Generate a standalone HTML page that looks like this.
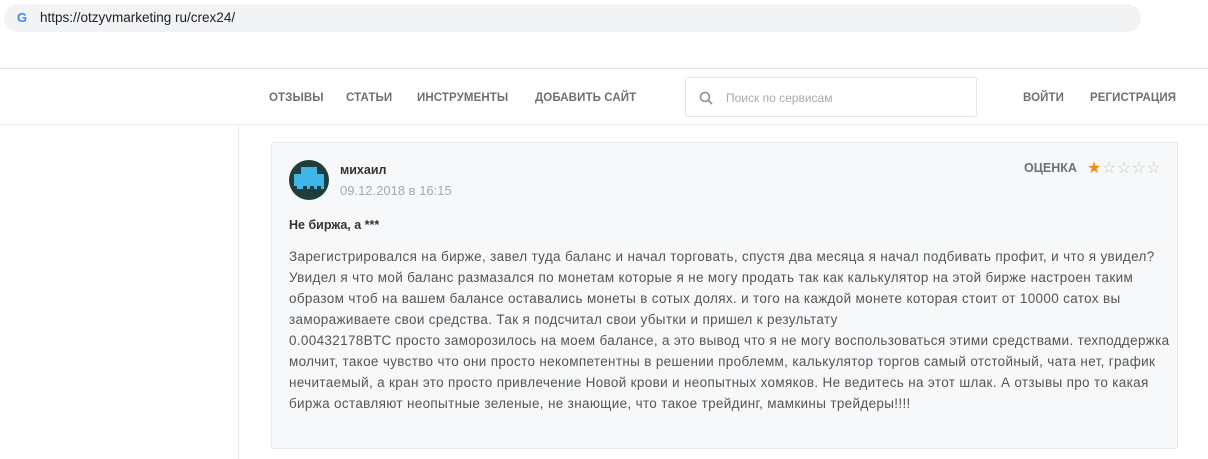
<!DOCTYPE html>
<html><head><meta charset="utf-8"><style>
*{margin:0;padding:0;box-sizing:border-box}
body{width:1208px;height:459px;background:#fff;font-family:"Liberation Sans",sans-serif;position:relative;overflow:hidden}
.url{position:absolute;left:4px;top:4px;width:1137px;height:28px;background:#f1f3f4;border-radius:14px}
.url .t{position:absolute;left:36px;top:6px;font-size:13.5px;color:#202124}
.url .g{position:absolute;left:13px;top:6px;font-size:13px;font-weight:bold;color:#4285f4}
.l1{position:absolute;left:0;top:68px;width:1208px;height:1px;background:#e3e3e3}
.l2{position:absolute;left:0;top:124px;width:1208px;height:1px;background:#ececec}
.nav{position:absolute;top:92px;font-size:11.5px;font-weight:bold;color:#6b7177;letter-spacing:0.1px}
.search{position:absolute;left:685px;top:77px;width:292px;height:40px;border:1px solid #e6e6e6;border-radius:3px}
.search span{position:absolute;left:40px;top:13px;font-size:12px;color:#a5abb0}
.side{position:absolute;left:238px;top:125px;width:1px;height:334px;background:#ececec}
.card{position:absolute;left:271px;top:142px;width:907px;height:307px;background:#f6f8fa;border:1px solid #e5e7ea;border-radius:3px}
.ava{position:absolute;left:17px;top:17px;width:40px;height:40px;border-radius:50%;background:#1f3d3a;overflow:hidden}
.name{position:absolute;left:68px;top:20px;font-size:12.5px;font-weight:bold;color:#333}
.date{position:absolute;left:68px;top:40px;font-size:13px;color:#a4a9ae}
.title{position:absolute;left:17px;top:75px;font-size:12.5px;font-weight:bold;color:#333}
.body{position:absolute;left:17px;top:103px;width:890px;font-size:13.5px;letter-spacing:0.33px;line-height:21px;color:#555;white-space:nowrap}
.rate{position:absolute;left:752px;top:18px;font-size:12.5px;font-weight:bold;color:#6b7177}
.stars{position:absolute;left:815px;top:15px;font-size:16px;color:#c8c8c8;letter-spacing:0.5px}
</style></head><body>
<div class="url"><span class="g">G</span><span class="t">https://otzyvmarketing ru/crex24/</span></div>
<div class="l1"></div><div class="l2"></div>
<div class="nav" style="left:269px">ОТЗЫВЫ</div>
<div class="nav" style="left:346px">СТАТЬИ</div>
<div class="nav" style="left:417px">ИНСТРУМЕНТЫ</div>
<div class="nav" style="left:535px">ДОБАВИТЬ САЙТ</div>
<div class="search"><svg style="position:absolute;left:13px;top:13px" width="14" height="14" viewBox="0 0 14 14"><circle cx="6" cy="6" r="4.5" fill="none" stroke="#8a9096" stroke-width="1.6"/><path d="M9.5 9.5L13 13" stroke="#8a9096" stroke-width="1.6"/></svg><span>Поиск по сервисам</span></div>
<div class="nav" style="left:1023px">ВОЙТИ</div>
<div class="nav" style="left:1090px">РЕГИСТРАЦИЯ</div>
<div class="side"></div>
<div class="card">
<div class="ava"><svg width="40" height="40" viewBox="0 0 40 40"><path d="M12 7h16v7h7v15h-3v-3h-4v3h-3v-3h-4v3h-3v-3h-4v3H8v-3H5V14h7z" fill="#3fb5ea"/></svg></div>
<div class="name">михаил</div>
<div class="date">09.12.2018 в 16:15</div>
<div class="rate">ОЦЕНКА</div>
<div class="stars"><span style="color:#f28c1e">★</span>☆☆☆☆</div>
<div class="title">Не биржа, а ***</div>
<div class="body">Зарегистрировался на бирже, завел туда баланс и начал торговать, спустя два месяца я начал подбивать профит, и что я увидел?<br>Увидел я что мой баланс размазался по монетам которые я не могу продать так как калькулятор на этой бирже настроен таким<br>образом чтоб на вашем балансе оставались монеты в сотых долях. и того на каждой монете которая стоит от 10000 сатох вы<br>замораживаете свои средства. Так я подсчитал свои убытки и пришел к результату<br>0.00432178BTC просто заморозилось на моем балансе, а это вывод что я не могу воспользоваться этими средствами. техподдержка<br>молчит, такое чувство что они просто некомпетентны в решении проблемм, калькулятор торгов самый отстойный, чата нет, график<br>нечитаемый, а кран это просто привлечение Новой крови и неопытных хомяков. Не ведитесь на этот шлак. А отзывы про то какая<br>биржа оставляют неопытные зеленые, не знающие, что такое трейдинг, мамкины трейдеры!!!!</div>
</div>
</body></html>
